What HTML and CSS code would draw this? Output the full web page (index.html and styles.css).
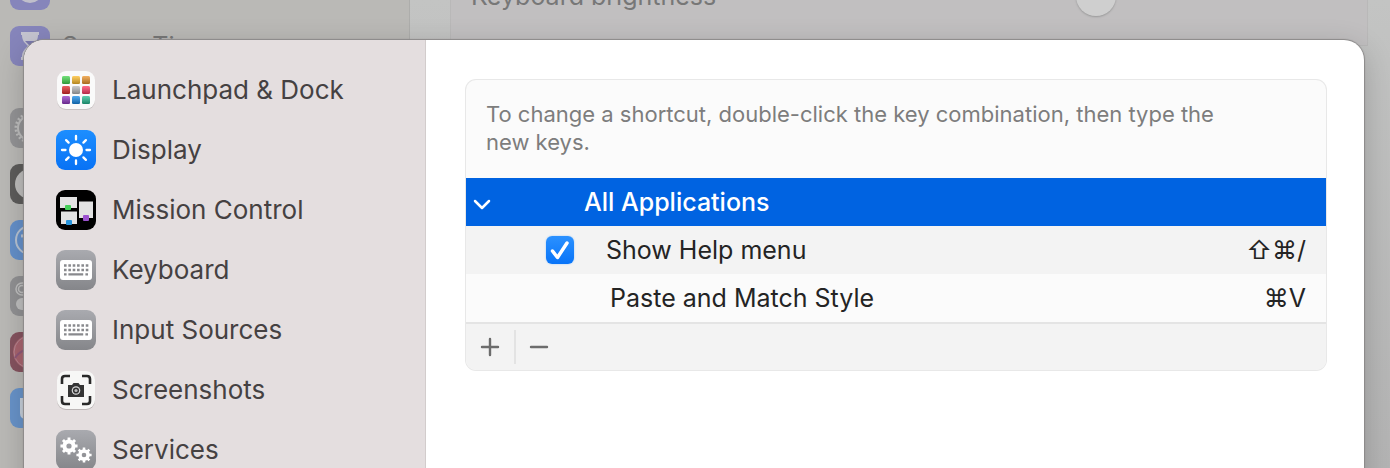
FILE: index.html
```html
<!DOCTYPE html>
<html lang="en">
<head>
<meta charset="utf-8">
<title>Keyboard Shortcuts</title>
<link rel="stylesheet" href="styles.css">
</head>
<body>
<svg class="defs" aria-hidden="true">
  <defs>
    <linearGradient id="gray" x1="0" y1="0" x2="0" y2="1"><stop offset="0" stop-color="#a9aaaf"/><stop offset="1" stop-color="#85868a"/></linearGradient>
    <linearGradient id="blue" x1="0" y1="0" x2="0" y2="1"><stop offset="0" stop-color="#1d8eff"/><stop offset="1" stop-color="#0872f5"/></linearGradient>
    <linearGradient id="shade" x1="0" y1="0" x2="0" y2="1"><stop offset="0" stop-color="#fff" stop-opacity=".25"/><stop offset="1" stop-color="#000" stop-opacity=".3"/></linearGradient>
    <symbol id="keyboard" viewBox="0 0 40 40">
      <rect width="40" height="40" rx="9" fill="url(#gray)"/>
      <rect x="4" y="10" width="32" height="20" rx="3" fill="#fff"/>
      <path d="M8 15.500H32.500M8 20H32.500" stroke="#88898d" stroke-width="2.600" stroke-dasharray="2.600 1.750"/>
      <path d="M8 24.300h2.600M12.400 24.300h14.800M29.400 24.300H32" stroke="#88898d" stroke-width="2.200"/>
    </symbol>
    <symbol id="gear" viewBox="-10 -10 20 20">
      <circle r="5.100" fill="none" stroke="currentColor" stroke-width="4.400"/>
      <path d="M0-9.500V-6M0 9.500V6M-9.500 0H-6M9.500 0H6M-6.700-6.700L-4.500-4.500M6.700-6.700L4.500-4.500M-6.700 6.700L-4.500 4.500M6.700 6.700L4.500 4.500" stroke="currentColor" stroke-width="3.200"/>
    </symbol>
  </defs>
</svg>
<div class="screen">
  <div class="window" aria-hidden="true">
    <div class="window-side">
      <div class="window-item"><svg class="icon" viewBox="0 0 40 40"><rect width="40" height="40" rx="9" fill="#8685bb"/><circle cx="20" cy="20" r="13" fill="#c0bfcb"/></svg>Focus</div>
      <div class="window-item"><svg class="icon" viewBox="0 0 40 40"><rect width="40" height="40" rx="9" fill="#8685bb"/><path d="M11 6h18v3h-1c0 6-3 8-6 11 3 3 6 5 6 11h1v3H11v-3h1c0-6 3-8 6-11-3-3-6-5-6-11h-1z" fill="#c5c4d0"/><path d="M15 15h10l-5 5zM15 31l5-7 5 7z" fill="#7b79ad"/></svg>Screen Time</div>
      <div class="window-item window-group"><svg class="icon gear-dim" viewBox="0 0 40 40"><rect width="40" height="40" rx="9" fill="#939395"/><circle cx="20" cy="20" r="12" fill="none" stroke="currentColor" stroke-width="2"/><circle cx="20" cy="20" r="14" fill="none" stroke="currentColor" stroke-width="3" stroke-dasharray="2 2"/></svg></div>
      <div class="window-item"><svg class="icon" viewBox="0 0 40 40"><rect width="40" height="40" rx="9" fill="#5d5c5b"/><circle cx="20" cy="20" r="15" fill="#bebdbc"/><circle cx="20" cy="20" r="6" fill="#5d5c5b"/></svg></div>
      <div class="window-item"><svg class="icon" viewBox="0 0 40 40"><rect width="40" height="40" rx="9" fill="#6490ca"/><circle cx="20" cy="20" r="14" fill="none" stroke="#b7c3d3" stroke-width="2"/><path d="M11 16l16-1" stroke="#b7c3d3" stroke-width="3"/></svg></div>
      <div class="window-item"><svg class="icon" viewBox="0 0 40 40"><rect width="40" height="40" rx="9" fill="#919193"/><rect x="6" y="7" width="28" height="12" rx="6" fill="none" stroke="#bfbfbf" stroke-width="1.500"/><circle cx="12" cy="13" r="3.500" fill="none" stroke="#bfbfbf" stroke-width="1.500"/><rect x="6" y="22" width="28" height="12" rx="6" fill="#bfbfbf"/></svg></div>
      <div class="window-item"><svg class="icon" viewBox="0 0 40 40"><rect width="40" height="40" rx="9" fill="#85535f"/><circle cx="20" cy="20" r="17" fill="#a8646f"/><circle cx="20" cy="20" r="16" fill="none" stroke="#b78792"/><path d="M5 26q6-10 26-12" fill="none" stroke="#8f5878" stroke-width="2"/></svg></div>
      <div class="window-item"><svg class="icon" viewBox="0 0 40 40"><rect width="40" height="40" rx="9" fill="#6893c9"/><path d="M12 10v15q0 4 4 4h12" fill="none" stroke="#c6cfda" stroke-width="4"/></svg></div>
    </div>
    <div class="window-main">
      <div class="window-card"><span>Keyboard brightness</span><span class="knob"></span></div>
    </div>
  </div>

  <main class="sheet">
    <nav class="side" aria-label="Shortcut categories">
      <a class="side-item" href="#launchpad"><svg class="icon" viewBox="0 0 40 40"><rect x="1" y="2" width="38" height="38" rx="9" fill="#c9c3c3"/><rect x="1" y="1" width="38" height="38" rx="9" fill="#fafafa"/>
        <g><rect x="6" y="6" width="8" height="8" rx="1.500" fill="#43d64d"/><rect x="16" y="6" width="8" height="8" rx="1.500" fill="#ffbd2c"/><rect x="26" y="6" width="8" height="8" rx="1.500" fill="#ed952b"/><rect x="6" y="16" width="8" height="8" rx="1.500" fill="#e1282b"/><rect x="16" y="16" width="8" height="8" rx="1.500" fill="#b8babd"/><rect x="26" y="16" width="8" height="8" rx="1.500" fill="#ff3b65"/><rect x="6" y="26" width="8" height="8" rx="1.500" fill="#9138c5"/><rect x="16" y="26" width="8" height="8" rx="1.500" fill="#158bea"/><rect x="26" y="26" width="8" height="8" rx="1.500" fill="#27bd93"/></g>
        <g fill="url(#shade)"><rect x="6" y="6" width="8" height="8" rx="1.500"/><rect x="16" y="6" width="8" height="8" rx="1.500"/><rect x="26" y="6" width="8" height="8" rx="1.500"/><rect x="6" y="16" width="8" height="8" rx="1.500"/><rect x="16" y="16" width="8" height="8" rx="1.500"/><rect x="26" y="16" width="8" height="8" rx="1.500"/><rect x="6" y="26" width="8" height="8" rx="1.500"/><rect x="16" y="26" width="8" height="8" rx="1.500"/><rect x="26" y="26" width="8" height="8" rx="1.500"/></g></svg>Launchpad &amp; Dock</a>
      <a class="side-item" href="#display"><svg class="icon" viewBox="0 0 40 40"><rect width="40" height="40" rx="9" fill="url(#blue)"/><circle cx="20" cy="20" r="7" fill="#fff"/><path d="M20 6v3.500M20 30.500V34M6 20h3.500M30.500 20H34M10.100 10.100l2.500 2.500M27.400 27.400l2.500 2.500M29.900 10.100l-2.500 2.500M12.600 27.400l-2.500 2.500" stroke="#fff" stroke-width="2.300" stroke-linecap="round"/></svg>Display</a>
      <a class="side-item" href="#mission"><svg class="icon" viewBox="0 0 40 40"><rect width="40" height="40" rx="9"/><path d="M4 7h17v11H4zM5 21.500h16V34H5zM23 11.500h14V28H23z" fill="#e2e2e2"/><rect x="9" y="15" width="6" height="5" rx="1" fill="#45cf5a"/><rect x="10" y="30" width="6" height="5" rx="1" fill="#2694dc"/><rect x="27" y="25" width="6" height="6" rx="1" fill="#9c52cf"/></svg>Mission Control</a>
      <a class="side-item" href="#keyboard-keys"><svg class="icon"><use href="#keyboard"/></svg>Keyboard</a>
      <a class="side-item" href="#input"><svg class="icon"><use href="#keyboard"/></svg>Input Sources</a>
      <a class="side-item" href="#screenshots"><svg class="icon" viewBox="0 0 40 40"><rect x="1" y="2" width="38" height="38" rx="9" fill="#bcb6b6"/><rect x="1" y="1" width="38" height="38" rx="9" fill="#f7f7f6"/><path d="M6 14V9q0-3 3-3h5M26 6h5q3 0 3 3v5M6 26v5q0 3 3 3h5M26 34h5q3 0 3-3v-5" fill="none" stroke="#292929" stroke-width="2.600"/><path d="M12 15h4l1.500-2h5l1.500 2h4v12H12z" fill="#343434"/><circle cx="20" cy="20.500" r="4.300" fill="#d8d8d8"/><circle cx="20" cy="20.500" r="3.100" fill="#333"/><circle cx="20" cy="20.500" r="1.600" fill="#bbb"/></svg>Screenshots</a>
      <a class="side-item" href="#services"><svg class="icon gear-light" viewBox="0 0 40 40"><rect width="40" height="40" rx="9" fill="url(#gray)"/><use href="#gear" x="4" y="7" width="18" height="18"/><use href="#gear" x="20" y="17" width="16" height="16"/></svg>Services</a>
    </nav>

    <div class="content">
      <section class="panel" aria-label="App shortcuts">
        <p class="hint">To change a shortcut, double-click the key combination, then type the new keys.</p>
        <table class="shortcuts">
          <tbody>
            <tr class="selected">
              <th scope="rowgroup" colspan="2"><div class="group"><button class="toggle" type="button" aria-expanded="true" aria-label="Collapse All Applications"><svg width="32" height="48" viewBox="0 0 32 48" aria-hidden="true"><path d="M9 23l7 7 7-7" fill="none" stroke="#fff" stroke-width="2.500" stroke-linecap="round" stroke-linejoin="round"/></svg></button><span>All Applications</span></div></th>
            </tr>
            <tr class="striped">
              <td><label class="option"><span class="tick"><input type="checkbox" checked><svg viewBox="0 0 28 28" aria-hidden="true"><path d="M6.500 15l5 6.500L21 7" fill="none" stroke="#fff" stroke-width="3.500" stroke-linecap="round" stroke-linejoin="round"/></svg></span><span>Show Help menu</span></label></td>
              <td class="keys">⇧⌘/</td>
            </tr>
            <tr>
              <td><div class="plain">Paste and Match Style</div></td>
              <td class="keys">⌘V</td>
            </tr>
          </tbody>
        </table>
        <div class="actions">
          <button class="action" type="button" aria-label="Add shortcut"><svg width="20" height="20" viewBox="0 0 20 20" aria-hidden="true"><path d="M2 10h16M10 2v16" stroke="#6c6c6c" stroke-width="2.400" stroke-linecap="round"/></svg></button>
          <button class="action" type="button" aria-label="Remove shortcut"><svg width="20" height="20" viewBox="0 0 20 20" aria-hidden="true"><path d="M2 10h16" stroke="#6c6c6c" stroke-width="2.400" stroke-linecap="round"/></svg></button>
        </div>
      </section>
    </div>
  </main>
</div>
</body>
</html>
```
FILE: styles.css
```css
* { box-sizing: border-box; }

body {
  margin: 0;
  font-family: Inter, "Liberation Sans", sans-serif;
  font-size: 25px;
  color: #242424;
}

button {
  padding: 0;
  border: 0;
  background: none;
  font: inherit;
}

svg { display: block; }

.defs { position: absolute; width: 0; height: 0; }

.icon { flex: none; width: 40px; height: 40px; }

.gear-light { color: #fff; }

.gear-dim { color: #bdbdbd; }

.screen {
  position: relative;
  height: 100vh;
  overflow: hidden;
}

/* Dimmed settings window behind the sheet */
.window {
  position: absolute;
  inset: 0;
  display: flex;
  background: #c0c0c0;
  color: #777;
}

.window-side {
  width: 410px;
  flex: none;
  display: flex;
  flex-direction: column;
  gap: 16px;
  margin-top: -30px;
  padding-left: 10px;
  background: #bab9b6;
  border-right: 1px solid #adadab;
}

.window-item {
  display: flex;
  align-items: center;
  gap: 12px;
  height: 40px;
}

.window-group { margin-top: 26px; }

.window-main {
  flex: 1;
  padding: 0 22px 0 40px;
  background: linear-gradient(#c3c4c3, #b4b4b4);
}

.window-card {
  display: flex;
  justify-content: space-between;
  align-items: center;
  height: 100px;
  margin-top: -54px;
  padding: 0 251px 0 20px;
  background: #c1bfc0;
  border: 1px solid #b9b8b8;
}

.knob {
  width: 40px;
  height: 40px;
  border-radius: 50%;
  background: #cfcfcf;
  box-shadow: 0 1px 2px #999;
}

/* Sheet */
.sheet {
  position: relative;
  display: flex;
  min-height: 100vh;
  margin: 40px 26px 0 24px;
  border-radius: 20px;
  background: #fff;
  box-shadow: 0 0 1px 1px #8b8989, 0 8px 30px rgba(0, 0, 0, .2);
}

.side {
  flex: none;
  display: flex;
  flex-direction: column;
  gap: 20px;
  width: 402px;
  padding: 30px 32px;
  border-right: 1px solid #d2cccc;
  border-radius: 20px 0 0 20px;
  background: #e4dedf;
}

.side-item {
  display: flex;
  align-items: center;
  gap: 16px;
  font-size: 26px;
  line-height: 40px;
  color: #454142;
  text-decoration: none;
}

.content {
  flex: 1;
  padding: 40px 38px 40px 40px;
}

.panel {
  overflow: hidden;
  border-radius: 10px;
  background: #fbfbfb;
  box-shadow: 0 0 0 1px #e8e8e8;
}

.hint {
  margin: 0;
  padding: 20px 80px 22px 20px;
  font-size: 22px;
  line-height: 28px;
  color: #7d7d7d;
}

.shortcuts {
  width: 100%;
  border-collapse: collapse;
  line-height: 48px;
}

.shortcuts th,
.shortcuts td { padding: 0; }

.selected { background: #0063e1; color: #fff; }

.striped { background: #f3f3f3; }

.group {
  display: flex;
  align-items: center;
  gap: 86px;
  font-weight: 500;
}

.toggle { width: 32px; height: 48px; }

.option {
  display: flex;
  align-items: center;
  gap: 32px;
  padding-left: 80px;
}

.tick { display: grid; width: 28px; height: 28px; }

.tick input,
.tick svg { grid-area: 1 / 1; width: 28px; height: 28px; margin: 0; }

.tick svg { pointer-events: none; z-index: 1; }

.tick input {
  appearance: none;
  border-radius: 6px;
  background: linear-gradient(#2b91ff, #0874f8);
  box-shadow: 0 0 2px #9ac7f5;
}

.tick input:not(:checked) + svg { visibility: hidden; }

.plain { padding-left: 144px; }

.shortcuts .keys { padding-right: 20px; text-align: right; }

.actions {
  display: flex;
  align-items: center;
  height: 48px;
  border-top: 2px solid #e4e4e4;
  background: #f3f3f3;
}

.action {
  display: grid;
  place-items: center;
  width: 48px;
  height: 34px;
}

.action + .action { border-left: 2px solid #e3e3e3; }
```
